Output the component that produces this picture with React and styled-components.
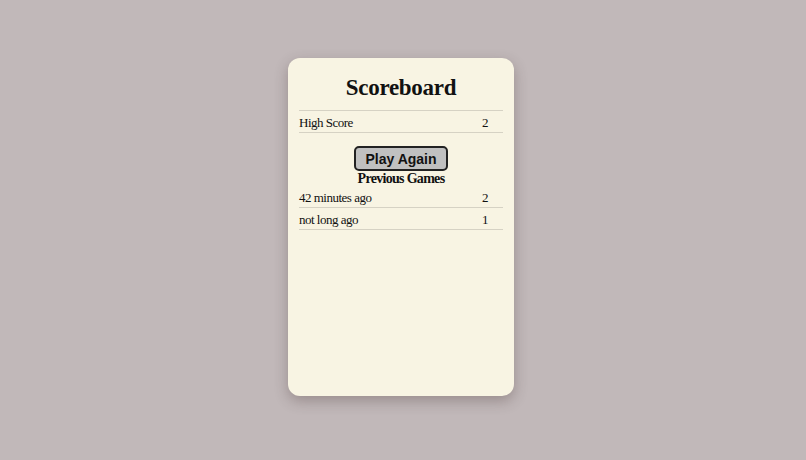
import React from "react";
import styled, { createGlobalStyle } from "styled-components";

const games = [
  { when: "42 minutes ago", score: 2 },
  { when: "not long ago", score: 1 },
];

const App = () => {
  return (
    <>
      <GlobalStyle />
      <Page>
        <Card>
          <Title>Scoreboard</Title>
          <Table>
            <Row $top>
              <Label>High Score</Label>
              <Value>2</Value>
            </Row>
          </Table>
          <Button>Play Again</Button>
          <SubTitle>Previous Games</SubTitle>
          <Table>
            {games.map((g) => (
              <Row key={g.when}>
                <Label>{g.when}</Label>
                <Value>{g.score}</Value>
              </Row>
            ))}
          </Table>
        </Card>
      </Page>
    </>
  );
};

export default App;

const GlobalStyle = createGlobalStyle`
html, body {
  margin: 0;
  padding: 0;
  background: #c1b8b9;
}
`;

const Page = styled.div`
width: 806px;
height: 460px;
display: flex;
justify-content: center;
padding: 58px 4px 0 0;
box-sizing: border-box;
font-family: "Liberation Serif", "Times New Roman", serif;
color: #111;
`;

const Card = styled.div`
width: 226px;
height: 338px;
box-sizing: border-box;
padding: 15px 11px;
background: #f8f4e3;
border-radius: 12px;
box-shadow: 0 5px 14px rgba(60, 40, 40, 0.3);
display: flex;
flex-direction: column;
align-items: stretch;
`;

const Title = styled.h1`
margin: 0 0 7px;
font-size: 23px;
line-height: 30px;
letter-spacing: -0.3px;
font-weight: bold;
text-align: center;
`;

const Table = styled.div`
display: flex;
flex-direction: column;
`;

const Row = styled.div`
display: flex;
align-items: center;
height: 19px;
padding-top: 2px;
font-size: 13px;
letter-spacing: -0.5px;
border-bottom: 1px solid #d6d2c4;
border-top: ${(p) => (p.$top ? "1px solid #d6d2c4" : "none")};
`;

const Label = styled.span`
flex: 1;
`;

const Value = styled.span`
width: 36px;
text-align: center;
`;

const Button = styled.button`
align-self: center;
margin-top: 13px;
height: 25px;
padding: 0 9px;
font-family: "Liberation Sans", Arial, sans-serif;
font-size: 14px;
font-weight: bold;
color: #111;
background: #c0c0c0;
border: 2px solid #222;
border-radius: 5px;
cursor: pointer;
`;

const SubTitle = styled.h2`
margin: 0;
font-size: 14px;
line-height: 15px;
letter-spacing: -0.7px;
font-weight: bold;
text-align: center;
`;
